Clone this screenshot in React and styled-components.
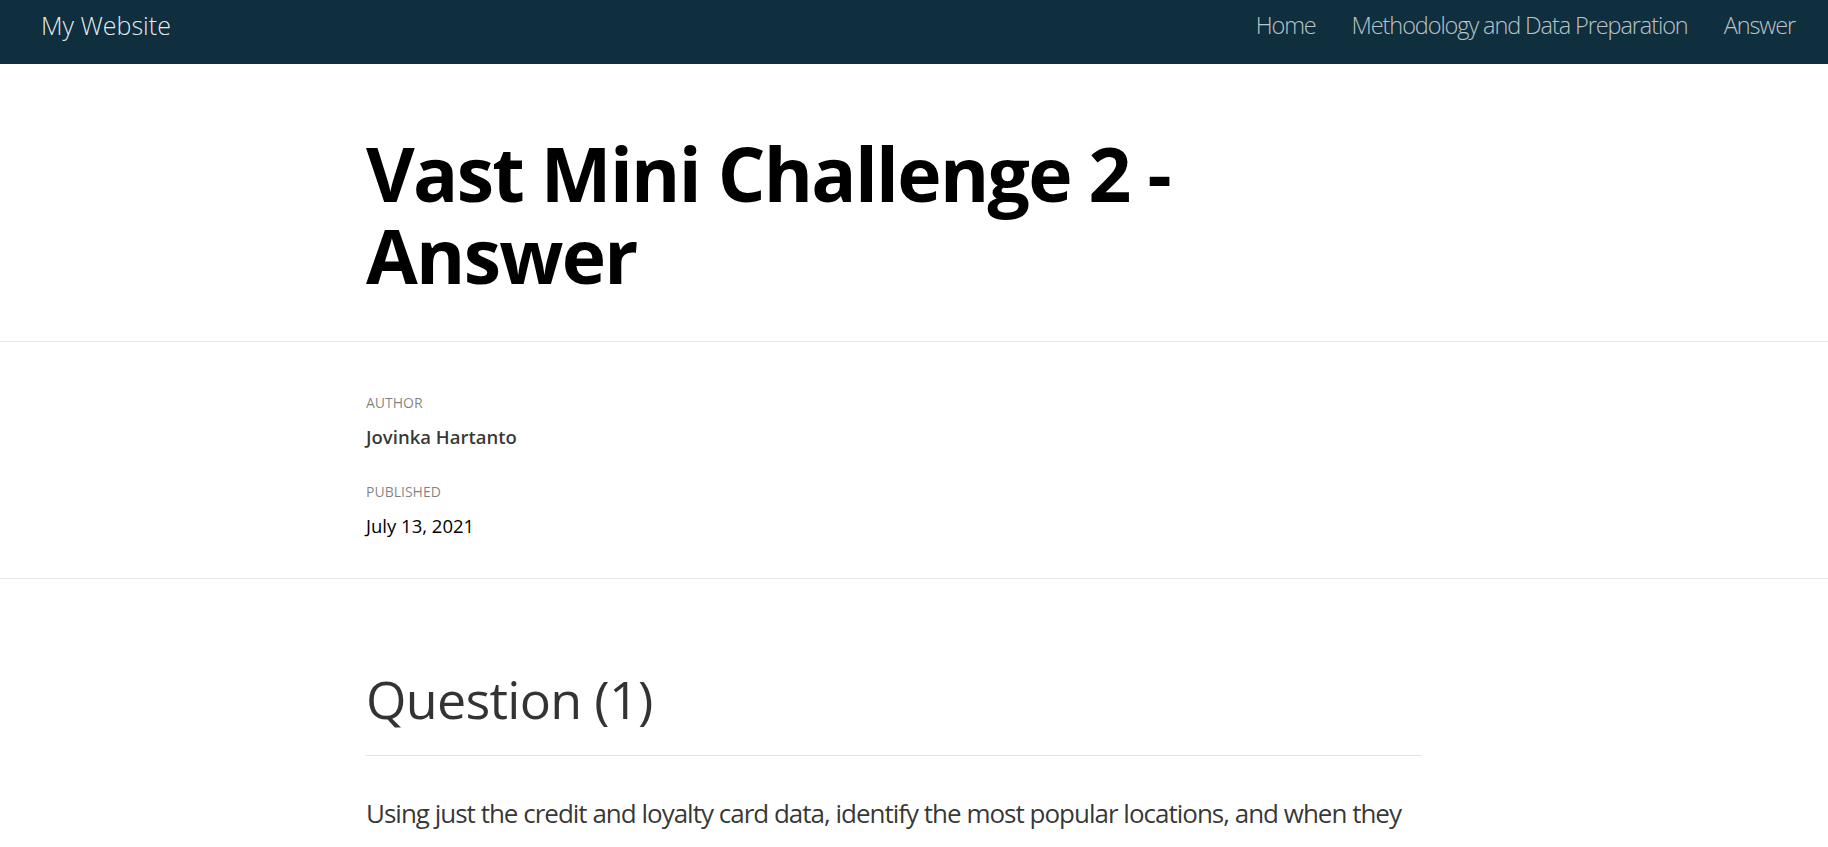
import styled, { createGlobalStyle } from "styled-components";

const GlobalStyle = createGlobalStyle`
  body {
    margin: 0;
    background: #fff;
    font-family: "Open Sans", "Noto Sans", sans-serif;
  }
`;

const Header = styled.header`
  // .distill-site-header
  display: flex;
  justify-content: space-between;
  align-items: flex-start;
  height: 64px;
  box-sizing: border-box;
  padding: 10px 33px 0 41px;
  background-color: #0f2e3e;
  font-weight: 300;
  font-size: 25px;
  line-height: 30px;
`;

const Brand = styled.a`
  color: rgba(255, 255, 255, 0.92);
  text-decoration: none;
`;

const Nav = styled.nav`
  display: flex;
  gap: 36px;
  font-size: 23.5px;
`;

const NavLink = styled.a`
  color: rgba(255, 255, 255, 0.72);
  text-decoration: none;
  letter-spacing: -1.1px;
`;

const TitleSection = styled.section`
  // d-title
  padding: 68px 0 45px 366px;
  border-bottom: 1px solid rgba(0, 0, 0, 0.1);
`;

const Title = styled.h1`
  margin: 0;
  font-size: 75px;
  line-height: 82px;
  font-weight: 700;
  color: #000;
  letter-spacing: -1.7px;
`;

const Byline = styled.section`
  // d-byline
  padding: 50px 0 38px 366px;
  border-bottom: 1px solid rgba(0, 0, 0, 0.1);
`;

const BylineItem = styled.div`
  & + & {
    margin-top: 30px;
  }
`;

const Label = styled.h3`
  margin: 0 0 9px;
  font-size: 14px;
  line-height: 22px;
  font-weight: 400;
  text-transform: uppercase;
  color: rgba(0, 0, 0, 0.5);
`;

const Value = styled.p`
  margin: 0;
  font-size: 18.5px;
  line-height: 28px;
  font-weight: ${(p) => (p.$strong ? 600 : 400)};
  color: ${(p) => (p.$strong ? "rgba(0, 0, 0, 0.8)" : "#000")};
`;

const Article = styled.article`
  // d-article
  width: 1056px;
  margin-left: 366px;
  padding-top: 89px;
`;

const H2 = styled.h2`
  margin: 0;
  padding-bottom: 25px;
  border-bottom: 1px solid rgba(0, 0, 0, 0.1);
  font-size: 52px;
  line-height: 62px;
  font-weight: 400;
  color: rgba(0, 0, 0, 0.8);
  letter-spacing: -0.7px;
`;

const P = styled.p`
  margin: 34px 0 0;
  font-size: 26px;
  line-height: 46px;
  color: rgba(0, 0, 0, 0.8);
  letter-spacing: -1px;
`;

export default function App() {
  return (
    <>
      <GlobalStyle />
      <Header>
        <Brand href="#">My Website</Brand>
        <Nav>
          <NavLink href="#">Home</NavLink>
          <NavLink href="#">Methodology and Data Preparation</NavLink>
          <NavLink href="#">Answer</NavLink>
        </Nav>
      </Header>
      <TitleSection>
        <Title>
          Vast Mini Challenge 2 -<br />
          Answer
        </Title>
      </TitleSection>
      <Byline>
        <BylineItem>
          <Label>Author</Label>
          <Value $strong>Jovinka Hartanto</Value>
        </BylineItem>
        <BylineItem>
          <Label>Published</Label>
          <Value>July 13, 2021</Value>
        </BylineItem>
      </Byline>
      <Article>
        <H2>Question (1)</H2>
        <P>
          Using just the credit and loyalty card data, identify the most
          popular locations, and when they are most popular. What anomalies do
          you see? What corrections would you recommend to correct these
          anomalies?
        </P>
      </Article>
    </>
  );
}
